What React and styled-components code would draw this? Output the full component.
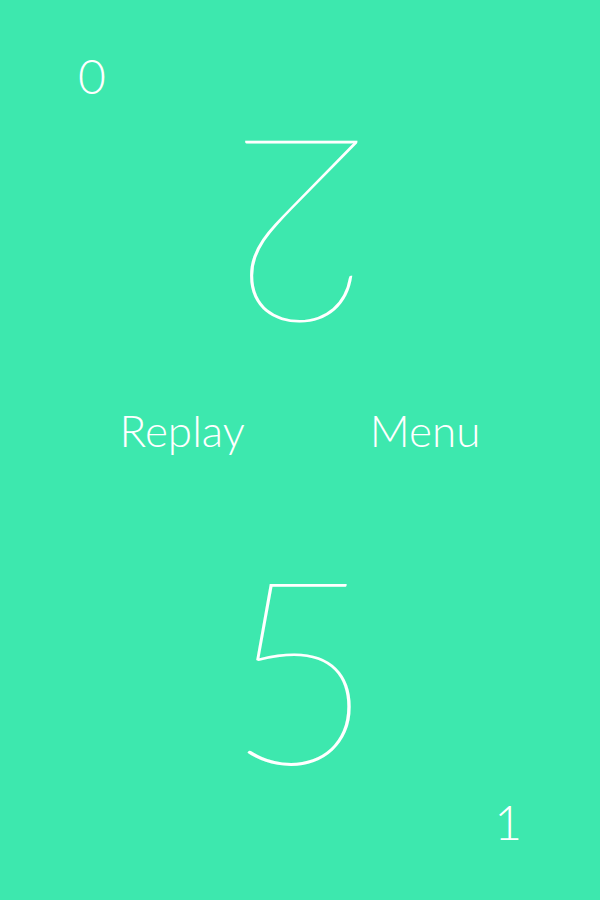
import React from 'react';
import styled, { createGlobalStyle } from 'styled-components';

const GlobalStyle = createGlobalStyle`
  html, body { margin: 0; padding: 0; }
  body {
    background: #3de8ae;
    font-family: Lato, "Open Sans", sans-serif;
    color: #ffffff;
  }
`;

const Screen = styled.div`
  width: 600px;
  height: 900px;
  background: #3de8ae;
  display: flex;
  flex-direction: column;
  overflow: hidden;
`;

const CornerRow = styled.div`
  display: flex;
  justify-content: ${(p) => (p.$end ? 'flex-end' : 'flex-start')};
  height: ${(p) => p.$h}px;
  padding: ${(p) => p.$pad};
  box-sizing: border-box;
`;

const Score = styled.span`
  font-size: 48px;
  font-weight: 300;
  line-height: 1;
`;

const DigitBox = styled.div`
  display: flex;
  justify-content: center;
  align-items: center;
  height: ${(p) => p.$h}px;
  margin-top: ${(p) => p.$mt || 0}px;
`;

const Digit = styled.span`
  font-size: 256px;
  font-weight: 200;
  line-height: 1;
  transform: ${(p) => (p.$flip ? 'rotate(180deg)' : 'none')};
`;

const ActionRow = styled.div`
  display: flex;
  justify-content: center;
  gap: 125px;
  height: 120px;
  align-items: center;
`;

const Action = styled.button`
  background: none;
  border: none;
  padding: 0;
  color: #ffffff;
  font-family: Lato, "Open Sans", sans-serif;
  font-size: 44px;
  font-weight: 300;
  cursor: pointer;
`;

export default function App() {
  return (
    <>
      <GlobalStyle />
      <Screen>
        <CornerRow $h={110} $pad="52px 0 0 78px">
          <Score>0</Score>
        </CornerRow>
        <DigitBox $h={260}>
          <Digit $flip>2</Digit>
        </DigitBox>
        <ActionRow>
          <Action>Replay</Action>
          <Action>Menu</Action>
        </ActionRow>
        <DigitBox $h={260} $mt={45}>
          <Digit>5</Digit>
        </DigitBox>
        <CornerRow $end $h={105} $pad="3px 78px 0 0">
          <Score>1</Score>
        </CornerRow>
      </Screen>
    </>
  );
}
